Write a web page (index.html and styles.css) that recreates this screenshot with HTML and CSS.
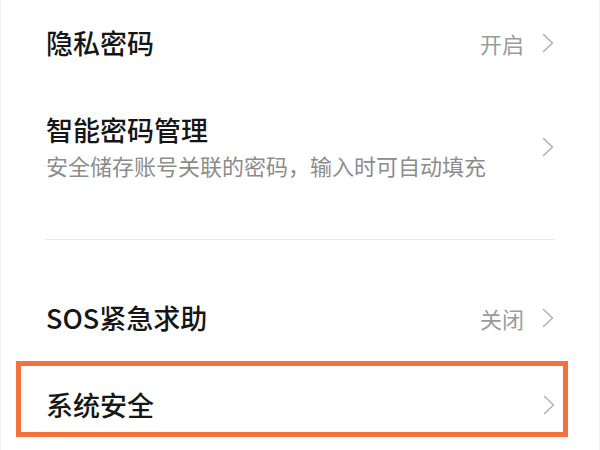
FILE: index.html
```html
<!DOCTYPE html>
<html lang="zh-CN">
<head>
    <meta charset="UTF-8">
    <meta name="viewport" content="width=device-width, initial-scale=1.0">
    <title>隐私与安全</title>
    <link rel="stylesheet" href="styles.css">
</head>
<body>
    <div class="screen">
        <div class="item">
            <span class="item-title">隐私密码</span>
            <span class="item-value">开启</span>
            <svg class="chevron" viewBox="0 0 12 20"><polyline points="1.5,1.5 10.5,10 1.5,18.5"/></svg>
        </div>

        <div class="item item-tall">
            <div class="item-text">
                <div class="item-title">智能密码管理</div>
                <div class="item-desc">安全储存账号关联的密码，输入时可自动填充</div>
            </div>
            <svg class="chevron" viewBox="0 0 12 20"><polyline points="1.5,1.5 10.5,10 1.5,18.5"/></svg>
        </div>

        <div class="divider"></div>

        <div class="item">
            <span class="item-title">SOS紧急求助</span>
            <span class="item-value">关闭</span>
            <svg class="chevron" viewBox="0 0 12 20"><polyline points="1.5,1.5 10.5,10 1.5,18.5"/></svg>
        </div>

        <div class="highlight">
            <div class="item item-boxed">
                <span class="item-title">系统安全</span>
                <svg class="chevron" viewBox="0 0 12 20"><polyline points="1.5,1.5 10.5,10 1.5,18.5"/></svg>
            </div>
        </div>
    </div>
</body>
</html>
```

FILE: styles.css
```css
body {
    font-family: "Noto Sans CJK SC", "Noto Sans", sans-serif;
    margin: 0;
    background-color: #ffffff;
}

.screen {
    width: 600px;
    height: 450px;
    box-sizing: border-box;
    border-left: 1px solid #f4f4f4;
    border-right: 1px solid #f4f4f4;
    overflow: hidden;
}

.item {
    display: flex;
    align-items: center;
    height: 85px;
    padding: 0 45px 0 45px;
}

.item-tall {
    height: 124px;
}

.item-text {
    flex: 1;
}

.item-title {
    flex: 1;
    font-size: 27px;
    line-height: 36px;
    font-weight: 500;
    color: #161616;
}

.item-desc {
    font-size: 22px;
    line-height: 34px;
    color: #8c8c8c;
}

.item-value {
    font-size: 22px;
    color: #9b9b9b;
    margin-right: 18px;
}

.chevron {
    width: 12px;
    height: 20px;
    flex-shrink: 0;
}

.chevron polyline {
    fill: none;
    stroke: #b3b3b3;
    stroke-width: 1.6;
    stroke-linecap: round;
    stroke-linejoin: round;
}

.divider {
    height: 1px;
    background-color: #e9e9e9;
    margin: 30px 44px 35px 44px;
}

.highlight {
    margin: 1px 31px 0 15px;
    border: 5px solid #f5703f;
}

.item-boxed {
    height: auto;
    padding: 21px 8px 9px 25px;
}
```
